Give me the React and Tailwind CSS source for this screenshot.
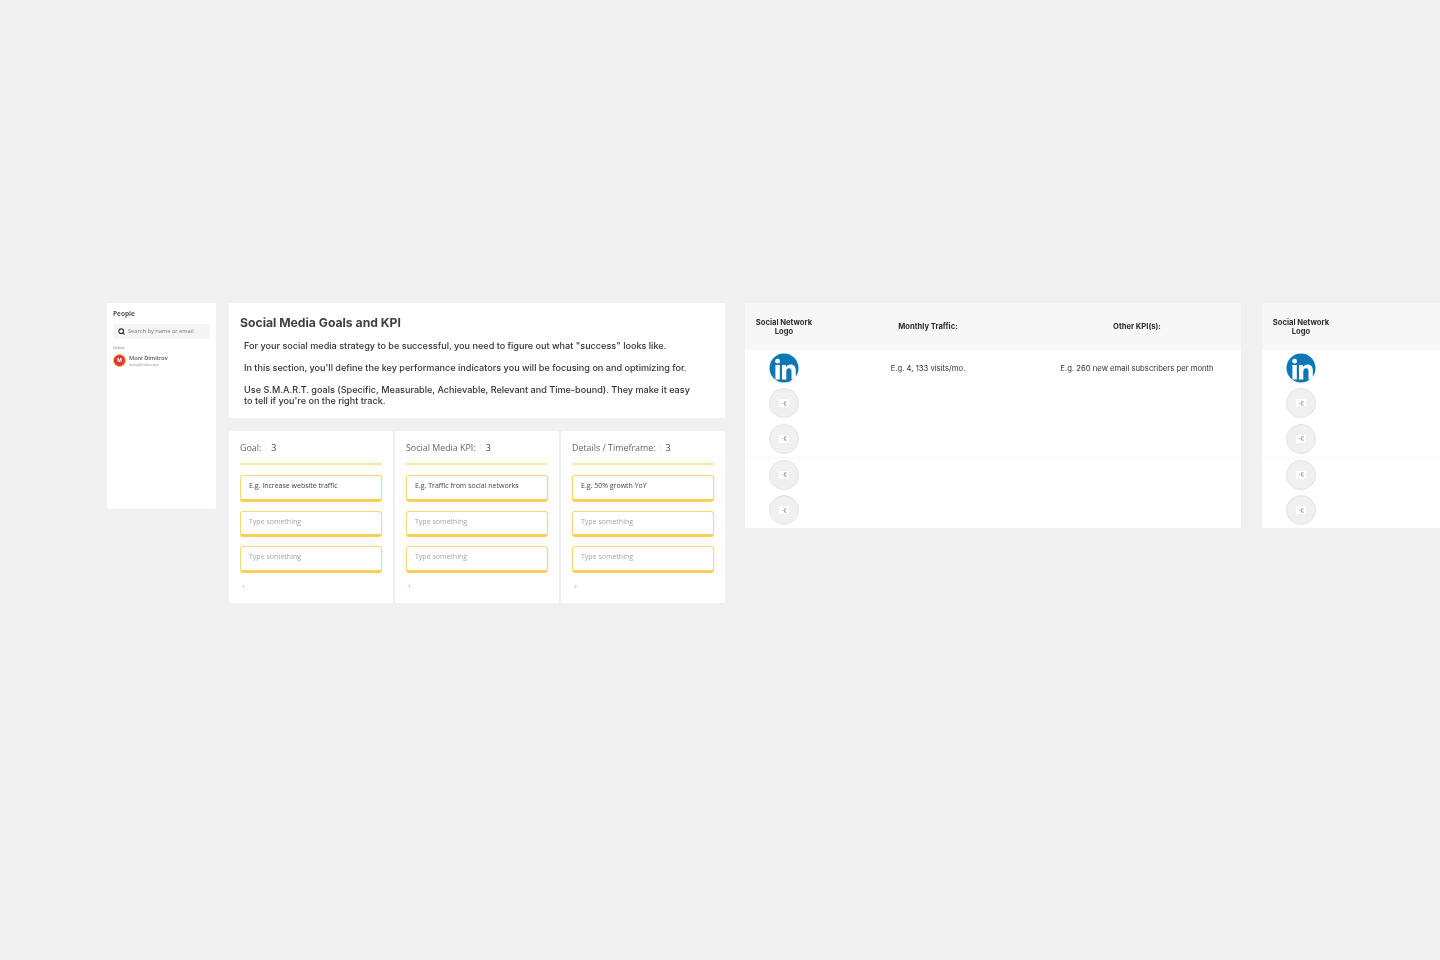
import { Search, Plus } from 'lucide-react';

const columns = [
  { title: 'Goal:', example: 'E.g. Increase website traffic' },
  { title: 'Social Media KPI:', example: 'E.g. Traffic from social networks' },
  { title: 'Details / Timeframe:', example: 'E.g. 50% growth YoY' },
];

function LinkedInLogo() {
  return (
    <svg viewBox="0 0 30 30" className="w-[30px] h-[30px]">
      <circle cx="15" cy="15" r="14.5" fill="#0a78b5" />
      <circle cx="8.6" cy="8.2" r="2.4" fill="#fff" />
      <rect x="6.4" y="12" width="4.4" height="14.500" fill="#fff" />
      <path d="M13 12h4v2c1-1.500 2.600-2.400 4.500-2.400 3.600 0 5.300 2.300 5.300 6v8.900h-4.300v-8c0-2-.7-3.300-2.400-3.300-1.900 0-2.800 1.400-2.800 3.400v7.900H13z" fill="#fff" />
    </svg>
  );
}

function EmptyLogo() {
  return (
    <div className="w-[30px] h-[30px] rounded-full bg-[#f0f0f0] border border-[#e3e3e3] flex items-center justify-center">
      <div className="w-[10px] h-[8px] bg-white flex items-center justify-center">
        <svg viewBox="0 0 6 6" className="w-[5px] h-[5px]">
          <path d="M.2 3h1.400M3.200 1h2.400M3.200 1v4M3.200 5h2.400" stroke="#444" strokeWidth="0.6" fill="none" />
        </svg>
      </div>
    </div>
  );
}

function LogoColumn() {
  return (
    <div className="grid grid-rows-5 h-full">
      <div className="flex items-center justify-center"><LinkedInLogo /></div>
      <div className="flex items-center justify-center"><EmptyLogo /></div>
      <div className="flex items-center justify-center shadow-[0_1px_0_#f7f7f7]"><EmptyLogo /></div>
      <div className="flex items-center justify-center"><EmptyLogo /></div>
      <div className="flex items-center justify-center"><EmptyLogo /></div>
    </div>
  );
}

function HeaderCell({ children }) {
  return (
    <div className="flex items-center justify-center text-center text-[7.600px] leading-[9px] font-bold text-[#2a2a2a]">
      {children}
    </div>
  );
}

function InputCard({ text, muted }) {
  return (
    <div className={`h-[26.500px] rounded-[3px] border border-[#fbd86f] border-b-[3px] border-b-[#fbcf55] pl-[8px] pt-[5px] text-[7px] leading-[10px] ${muted ? 'text-[#a5a5a5]' : 'text-[#444]'}`}>
      {text}
    </div>
  );
}

export default function App() {
  return (
    <div className="w-[1440px] h-[960px] overflow-hidden bg-[#f0f0f0] pt-[303px] pl-[107px] flex items-start font-['Inter',sans-serif] blur-[0.35px]">
      {/* people panel */}
      <div className="w-[109px] h-[206px] shrink-0 bg-white rounded-[1px] px-[6px] pt-[7px]">
        <div className="text-[6.500px] leading-[8px] font-bold text-[#555] font-['Open_Sans',sans-serif]">People</div>
        <div className="mt-[6px] h-[15px] bg-[#f5f5f5] rounded-[2px] flex items-center pl-[5px] gap-[3px]">
          <Search size={7} strokeWidth={3.500} className="text-[#333]" />
          <span className="text-[5.700px] text-[#777] font-['Open_Sans',sans-serif]">Search by name or email</span>
        </div>
        <div className="mt-[6px] text-[3.800px] leading-[5px] text-[#777] font-['Open_Sans',sans-serif]">Online</div>
        <div className="mt-[4px] flex items-center gap-[3px]">
          <div className="w-[13px] h-[13px] rounded-full bg-[#e2333c] border border-[#f5c34a] flex items-center justify-center text-white text-[5px] font-bold">
            M
          </div>
          <div className="font-['Open_Sans',sans-serif]">
            <div className="text-[5.600px] leading-[7px] font-semibold text-[#555]">Moni Dimitrov</div>
            <div className="text-[3.800px] leading-[5px] text-[#888]">many@mirs.com</div>
          </div>
        </div>
      </div>

      {/* goals */}
      <div className="w-[496px] shrink-0 ml-[13px] flex flex-col gap-[13px]">
        <div className="h-[115px] bg-white rounded-[1px] pl-[11px] pt-[12px] text-[#333]">
          <h1 className="text-[12.200px] leading-[16px] font-bold text-[#3f3f3f]">Social Media Goals and KPI</h1>
          <div className="pl-[4px] mt-[9px] w-[452px] text-[9.100px] leading-[11px] font-medium">
            <p>For your social media strategy to be successful, you need to figure out what "success" looks like.</p>
            <p className="mt-[11px]">In this section, you'll define the key performance indicators you will be focusing on and optimizing for.</p>
            <p className="mt-[11px]">Use S.M.A.R.T. goals (Specific, Measurable, Achievable, Relevant and Time-bound). They make it easy to tell if you're on the right track.</p>
          </div>
        </div>
        <div className="flex gap-[2px] h-[172px] font-['Open_Sans',sans-serif]">
          {columns.map((col) => (
            <div key={col.title} className="w-[164px] bg-white rounded-[2px] px-[11px] pt-[10px]">
              <div className="flex items-center h-[13px] text-[8.900px] text-[#666]">
                <span>{col.title}</span>
                <span className="ml-[4px] w-px h-[7px] bg-[#eee]" />
                <span className="ml-[5px] text-[#444]">3</span>
              </div>
              <div className="mt-[9px] h-[2px] bg-[#fbe7a6]" />
              <div className="mt-[10px] flex flex-col gap-[9px]">
                <InputCard text={col.example} />
                <InputCard text="Type something" muted />
                <InputCard text="Type something" muted />
              </div>
              <Plus size={7} strokeWidth={1.500} className="mt-[10px] text-[#c4c4c4]" />
            </div>
          ))}
        </div>
      </div>

      {/* table one */}
      <div className="w-[496px] h-[225px] shrink-0 ml-[20px] bg-white grid grid-cols-[78px_210px_208px] grid-rows-[47px_178px]">
        <div className="col-span-3 grid grid-cols-[78px_210px_208px] bg-[#f7f7f7]">
          <HeaderCell>Social Network<br />Logo</HeaderCell>
          <HeaderCell>Monthly Traffic:</HeaderCell>
          <HeaderCell>Other KPI(s):</HeaderCell>
        </div>
        <LogoColumn />
        <div className="col-span-2 grid grid-rows-5 text-[#333] text-[7.700px]">
          <div className="grid grid-cols-[210px_208px] pt-[1px]">
            <div className="flex items-center justify-center">E.g. 4, 133 visits/mo.</div>
            <div className="flex items-center justify-center">E.g. 260 new email subscribers per month</div>
          </div>
          <div />
          <div className="shadow-[0_1px_0_#f7f7f7]" />
          <div />
          <div />
        </div>
      </div>

      {/* table two, cut off by the window */}
      <div className="w-[496px] h-[225px] shrink-0 ml-[21px] bg-white grid grid-cols-[78px_1fr] grid-rows-[47px_178px]">
        <div className="col-span-2 grid grid-cols-[78px_1fr] bg-[#f7f7f7]">
          <HeaderCell>Social Network<br />Logo</HeaderCell>
          <div />
        </div>
        <LogoColumn />
        <div className="grid grid-rows-5">
          <div />
          <div />
          <div className="shadow-[0_1px_0_#f7f7f7]" />
          <div />
          <div />
        </div>
      </div>
    </div>
  );
}
